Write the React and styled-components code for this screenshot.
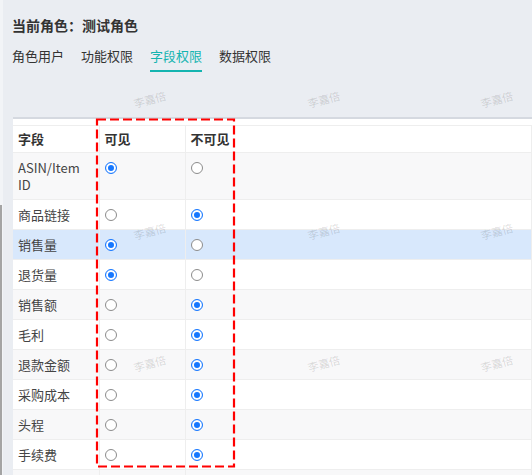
import React from 'react';
import styled, { createGlobalStyle } from 'styled-components';

const GlobalStyle = createGlobalStyle`
  html, body {
    margin: 0;
    padding: 0;
    background: #eaedf2;
    font-family: "Noto Sans CJK SC", "Noto Sans", sans-serif;
    overflow: hidden;
  }
`;

const Page = styled.div`
  position: relative;
  display: flex;
  height: 475px;
  overflow: hidden;
`;

const LeftEdge = styled.div`
  width: 3px;
  display: flex;
  flex-direction: column;
  background: #f2f4f7;
`;

const EdgeSpacer = styled.div`
  height: 205px;
`;

const EdgeBar = styled.div`
  flex: 1;
  width: 2px;
  background: #a4a4a4;
`;

const Main = styled.div`
  flex: 1;
  padding: 15px 0 0 10px;
  min-width: 0;
`;

const Title = styled.div`
  font-size: 14px;
  line-height: 20px;
  font-weight: 700;
  color: #333;
  margin-left: -1px;
`;

const Tabs = styled.div`
  display: flex;
  gap: 17px;
  margin-top: 11px;
  margin-left: -1px;
`;

const Tab = styled.div`
  font-size: 13px;
  line-height: 20px;
  padding-bottom: 4px;
  color: ${p => (p.$active ? '#14b4b0' : '#333')};
  border-bottom: 2px solid ${p => (p.$active ? '#14b4b0' : 'transparent')};
`;

const TableWrap = styled.div`
  margin-top: 45px;
  border-top: 2px solid #d5d9e0;
  background: #fff;
  padding-top: 6px;
`;

const Table = styled.table`
  border-collapse: collapse;
  width: 100%;
  table-layout: fixed;
  font-size: 13px;
  line-height: 17px;
  border-top: 1px solid #eeeeee;
`;

const Col = styled.col`
  width: ${p => p.$w || 'auto'};
`;

const Th = styled.th`
  text-align: left;
  font-weight: 700;
  color: #333;
  padding: 4px 5px 5px 5px;
  border-bottom: 1px solid #eeeeee;
  border-right: 1px solid #eeeeee;
  background: #fff;
`;

const Tr = styled.tr`
  background: ${p => (p.$hover ? '#d8e8fc' : p.$striped ? '#f8f8f9' : '#fff')};
`;

const Td = styled.td`
  vertical-align: top;
  color: #444;
  padding: 6px 5px;
  border-bottom: 1px solid #eeeeee;
  border-right: 1px solid #eeeeee;
  word-wrap: break-word;
`;

const Radio = styled.span`
  display: block;
  box-sizing: border-box;
  width: 12px;
  height: 12px;
  margin: 2.5px 0 2.5px 0;
  border-radius: 50%;
  background: #fff;
  border: 1px solid ${p => (p.$checked ? '#1677ff' : '#8c8c8c')};
  box-shadow: ${p => (p.$checked ? 'inset 0 0 0 2px #fff, inset 0 0 0 6px #1677ff' : 'none')};
`;

const Watermarks = styled.div`
  position: absolute;
  left: 63px;
  top: 33px;
  display: grid;
  grid-template-columns: repeat(3, 173.5px);
  grid-template-rows: repeat(3, 132px);
  pointer-events: none;
`;

const Mark = styled.div`
  display: flex;
  align-items: center;
  justify-content: center;
  font-size: 11px;
  color: rgba(0, 0, 0, 0.14);
  transform: rotate(-15deg);
`;

const Annotation = styled.svg`
  position: absolute;
  left: 95px;
  top: 118px;
  pointer-events: none;
`;

const rows = [
  { name: 'ASIN/Item ID', visible: true },
  { name: '商品链接', visible: false },
  { name: '销售量', visible: true, hover: true },
  { name: '退货量', visible: true },
  { name: '销售额', visible: false },
  { name: '毛利', visible: false },
  { name: '退款金额', visible: false },
  { name: '采购成本', visible: false },
  { name: '头程', visible: false },
  { name: '手续费', visible: false },
];

const tabs = ['角色用户', '功能权限', '字段权限', '数据权限'];

export default function App() {
  return (
    <>
      <GlobalStyle />
      <Page>
        <LeftEdge>
          <EdgeSpacer />
          <EdgeBar />
        </LeftEdge>
        <Main>
          <Title>当前角色：测试角色</Title>
          <Tabs>
            {tabs.map(t => (
              <Tab key={t} $active={t === '字段权限'}>{t}</Tab>
            ))}
          </Tabs>
          <TableWrap>
            <Table>
              <colgroup>
                <Col $w="86px" />
                <Col $w="86px" />
                <Col />
              </colgroup>
              <thead>
                <tr>
                  <Th>字段</Th>
                  <Th>可见</Th>
                  <Th>不可见</Th>
                </tr>
              </thead>
              <tbody>
                {rows.map((r, i) => (
                  <Tr key={r.name} $striped={i % 2 === 0} $hover={r.hover}>
                    <Td>{r.name}</Td>
                    <Td><Radio $checked={r.visible} /></Td>
                    <Td><Radio $checked={!r.visible} /></Td>
                  </Tr>
                ))}
                <Tr $striped>
                  <Td>&nbsp;</Td>
                  <Td />
                  <Td />
                </Tr>
              </tbody>
            </Table>
          </TableWrap>
        </Main>
        <Watermarks>
          {Array.from({ length: 9 }).map((_, i) => (
            <Mark key={i}>李嘉倍</Mark>
          ))}
        </Watermarks>
        <Annotation width="142" height="352">
          <rect x="2" y="1.5" width="137" height="347" fill="none" stroke="#ff0000" strokeWidth="2.2" strokeDasharray="9 4" />
        </Annotation>
      </Page>
    </>
  );
}
